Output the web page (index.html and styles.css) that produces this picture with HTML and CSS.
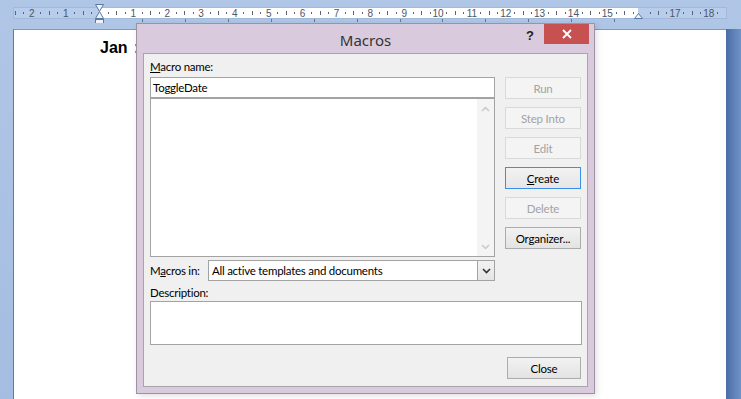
FILE: index.html
```html
<!DOCTYPE html>
<html lang="en">
<head>
  <meta charset="UTF-8" />
  <title>Macros</title>
  <link rel="stylesheet" href="styles.css">
</head>
<body>
  <div class="app">
    <div class="ruler-row">
      <svg class="ruler" id="ruler" width="741" height="23" viewBox="0 0 741 23">
        <rect x="13.5" y="7.5" width="713" height="11" fill="#b8cceb" stroke="#a3b9da"/>
        <rect x="100" y="8" width="538" height="10" fill="#ffffff"/>
        <g id="ticks"></g>
        <!-- left indent hourglass -->
        <path d="M95.5 4.5 H103.5 L99.5 11.5 Z" fill="#eef3fa" stroke="#5b79a3"/>
        <path d="M99.5 11.5 L103.5 18.5 H95.5 Z" fill="#eef3fa" stroke="#5b79a3"/>
        <rect x="95.5" y="19.5" width="8" height="5" fill="#eef3fa" stroke="#5b79a3"/>
        <!-- right indent -->
        <path d="M634.5 18.5 L638.5 13.5 L642.5 18.5 Z" fill="#eef3fa" stroke="#5b79a3"/>
      </svg>
    </div>

    <div class="workspace">
      <div class="page">
        <p class="page-text">Jan :</p>
      </div>
      <div class="side-strip"></div>
    </div>

    <div class="dialog">
      <div class="dialog-title">
        <span class="title-text">Macros</span>
        <span class="help">?</span>
        <button class="close-x" aria-label="Close">
          <svg width="10" height="10" viewBox="0 0 10 10">
            <path d="M1 1 L9 9 M9 1 L1 9" stroke="#ffffff" stroke-width="1.8"/>
          </svg>
        </button>
      </div>

      <div class="dialog-body">
        <div class="top-area">
          <div class="left-col">
            <label class="field-label"><u>M</u>acro name:</label>
            <div class="name-input">ToggleDate</div>
            <div class="macro-list">
              <div class="scrollbar">
                <svg width="9" height="6" viewBox="0 0 9 6"><path d="M1 5 L4.5 1.5 L8 5" fill="none" stroke="#c8c8c8" stroke-width="1.5"/></svg>
                <svg width="9" height="6" viewBox="0 0 9 6"><path d="M1 1 L4.5 4.5 L8 1" fill="none" stroke="#c8c8c8" stroke-width="1.5"/></svg>
              </div>
            </div>
          </div>

          <div class="button-col">
            <button class="btn disabled">Run</button>
            <button class="btn disabled">Step Into</button>
            <button class="btn disabled">Edit</button>
            <button class="btn focused"><u>C</u>reate</button>
            <button class="btn disabled">Delete</button>
            <button class="btn">Or<u>g</u>anizer...</button>
          </div>
        </div>

        <div class="macros-in">
          <span class="field-label">M<u>a</u>cros in:</span>
          <div class="select">
            <span class="select-text">All active templates and documents</span>
            <span class="select-btn">
              <svg width="9" height="6" viewBox="0 0 9 6"><path d="M1 1 L4.5 4.5 L8 1" fill="none" stroke="#333333" stroke-width="1.6"/></svg>
            </span>
          </div>
        </div>

        <label class="field-label desc-label">Description:</label>
        <div class="desc-box"></div>

        <div class="footer">
          <button class="btn">Close</button>
        </div>
      </div>
    </div>
  </div>

  <script>
    // ruler ticks: origin at the left margin, 1 cm = 33.85px
    const origin = 99.5;
    const unit = 33.85;
    const g = document.getElementById('ticks');
    const ns = 'http://www.w3.org/2000/svg';

    for (let q = -10; q <= 73; q++) {
      const x = origin + q * unit / 4;
      if (q % 4 === 0) {
        const n = Math.abs(q / 4);
        if (n === 0 || n === 16) continue;
        const t = document.createElementNS(ns, 'text');
        t.setAttribute('x', x.toFixed(1));
        t.setAttribute('y', '16.5');
        t.setAttribute('class', 'ruler-num');
        t.textContent = n;
        g.appendChild(t);
      } else {
        const r = document.createElementNS(ns, 'rect');
        const half = q % 2 === 0;
        r.setAttribute('x', Math.round(x));
        r.setAttribute('y', half ? 11 : 12);
        r.setAttribute('width', 1);
        r.setAttribute('height', half ? 4 : 2);
        r.setAttribute('fill', '#5a6675');
        g.appendChild(r);
      }
    }

    // default tab stops under the ruler
    for (let i = 1; i <= 12; i++) {
      const r = document.createElementNS(ns, 'rect');
      r.setAttribute('x', Math.round(origin + i * 42.86));
      r.setAttribute('y', 19);
      r.setAttribute('width', 1);
      r.setAttribute('height', 3);
      r.setAttribute('fill', '#6b7788');
      g.appendChild(r);
    }
  </script>
</body>
</html>
```

FILE: styles.css
```css
* {
  box-sizing: border-box;
  margin: 0;
  padding: 0;
}

body {
  width: 741px;
  height: 399px;
  overflow: hidden;
  background-color: #a8c0e2;
  font-family: Lato, Roboto, sans-serif;
}

.app {
  position: relative;
  width: 741px;
  height: 399px;
  display: flex;
  flex-direction: column;
  background: linear-gradient(to bottom, #b0c6e6, #a4bde0);
}

.ruler-row {
  height: 23px;
}

.ruler {
  display: block;
}

.ruler-num {
  font-family: "Liberation Sans", Arial, sans-serif;
  font-size: 10px;
  fill: #4b5668;
  text-anchor: middle;
}

.workspace {
  flex: 1;
  display: flex;
  padding: 6px 0 0 13px;
}

.page {
  width: 713px;
  background-color: #ffffff;
  border-left: 1px solid #6f7780;
  border-top: 1px solid #8d96a3;
  padding: 9px 0 0 86px;
}

.page-text {
  font-family: "Liberation Sans", Arial, sans-serif;
  font-weight: bold;
  font-size: 16px;
  word-spacing: 2px;
  color: #000000;
}

.side-strip {
  flex: 1;
  background: linear-gradient(to right, #4a6da6, #6f93c9);
}

/* dialog window */
.dialog {
  position: absolute;
  left: 136px;
  top: 23px;
  width: 459px;
  height: 371px;
  background-color: #d9cbdd;
  border: 1px solid #9c93a0;
  box-shadow: 2px 2px 6px rgba(0, 0, 0, 0.12);
  display: flex;
  flex-direction: column;
  padding: 0 6px 6px 6px;
}

.dialog-title {
  height: 29px;
  position: relative;
  display: flex;
  align-items: center;
  justify-content: center;
}

.title-text {
  font-family: "Noto Sans", sans-serif;
  font-size: 15px;
  color: #333333;
  margin-top: 2px;
}

.help {
  position: absolute;
  right: 54px;
  top: 4px;
  font-family: "Liberation Sans", Arial, sans-serif;
  font-weight: bold;
  font-size: 13px;
  color: #222222;
}

.close-x {
  position: absolute;
  right: -1px;
  top: 0;
  width: 45px;
  height: 20px;
  border: none;
  background-color: #c75050;
  display: flex;
  align-items: center;
  justify-content: center;
}

.dialog-body {
  flex: 1;
  background-color: #f0f0f0;
  border: 1px solid #a6a6a6;
  padding: 0 5px 0 6px;
  font-size: 11.5px;
  letter-spacing: -0.25px;
  color: #000000;
}

.top-area {
  display: flex;
  gap: 10px;
}

.left-col {
  width: 345px;
  display: flex;
  flex-direction: column;
}

.field-label {
  display: block;
  line-height: 14px;
}

.left-col .field-label {
  margin-top: 6px;
  margin-bottom: 3px;
}

.name-input {
  height: 21px;
  background-color: #ffffff;
  border: 1px solid #a3a3a3;
  padding: 2px 0 0 2px;
  line-height: 15px;
}

.macro-list {
  height: 159px;
  background-color: #ffffff;
  border: 1px solid #a3a3a3;
  display: flex;
  justify-content: flex-end;
}

.scrollbar {
  width: 17px;
  background-color: #f4f4f4;
  display: flex;
  flex-direction: column;
  justify-content: space-between;
  align-items: center;
  padding: 7px 0 6px;
}

.button-col {
  width: 76px;
  padding-top: 23px;
  display: flex;
  flex-direction: column;
  gap: 8px;
}

.btn {
  height: 22px;
  width: 76px;
  font-family: inherit;
  font-size: 11.5px;
  letter-spacing: -0.2px;
  color: #000000;
  background: linear-gradient(to bottom, #f2f2f2, #e3e3e3);
  border: 1px solid #acacac;
}

.btn.disabled {
  background: #f4f4f4;
  border-color: #d9d9d9;
  color: #a3a3a3;
}

.btn.focused {
  border-color: #3c8ee8;
  background: linear-gradient(to bottom, #f2f2f2, #e6e6e6);
}

.macros-in {
  width: 345px;
  margin-top: 3px;
  display: flex;
  align-items: center;
}

.macros-in .field-label {
  width: 58px;
}

.select {
  flex: 1;
  height: 21px;
  background-color: #ffffff;
  border: 1px solid #a3a3a3;
  display: flex;
  align-items: center;
}

.select-text {
  flex: 1;
  padding-left: 3px;
}

.select-btn {
  width: 17px;
  height: 19px;
  border-left: 1px solid #a3a3a3;
  background: linear-gradient(to bottom, #f2f2f2, #e5e5e5);
  display: flex;
  align-items: center;
  justify-content: center;
}

.desc-label {
  margin-top: 5px;
  margin-bottom: 1px;
}

.desc-box {
  width: 432px;
  height: 44px;
  background-color: #ffffff;
  border: 1px solid #a3a3a3;
}

.footer {
  display: flex;
  justify-content: flex-end;
  margin-top: 12px;
  padding-right: 1px;
}

.footer .btn {
  width: 74px;
}
```
